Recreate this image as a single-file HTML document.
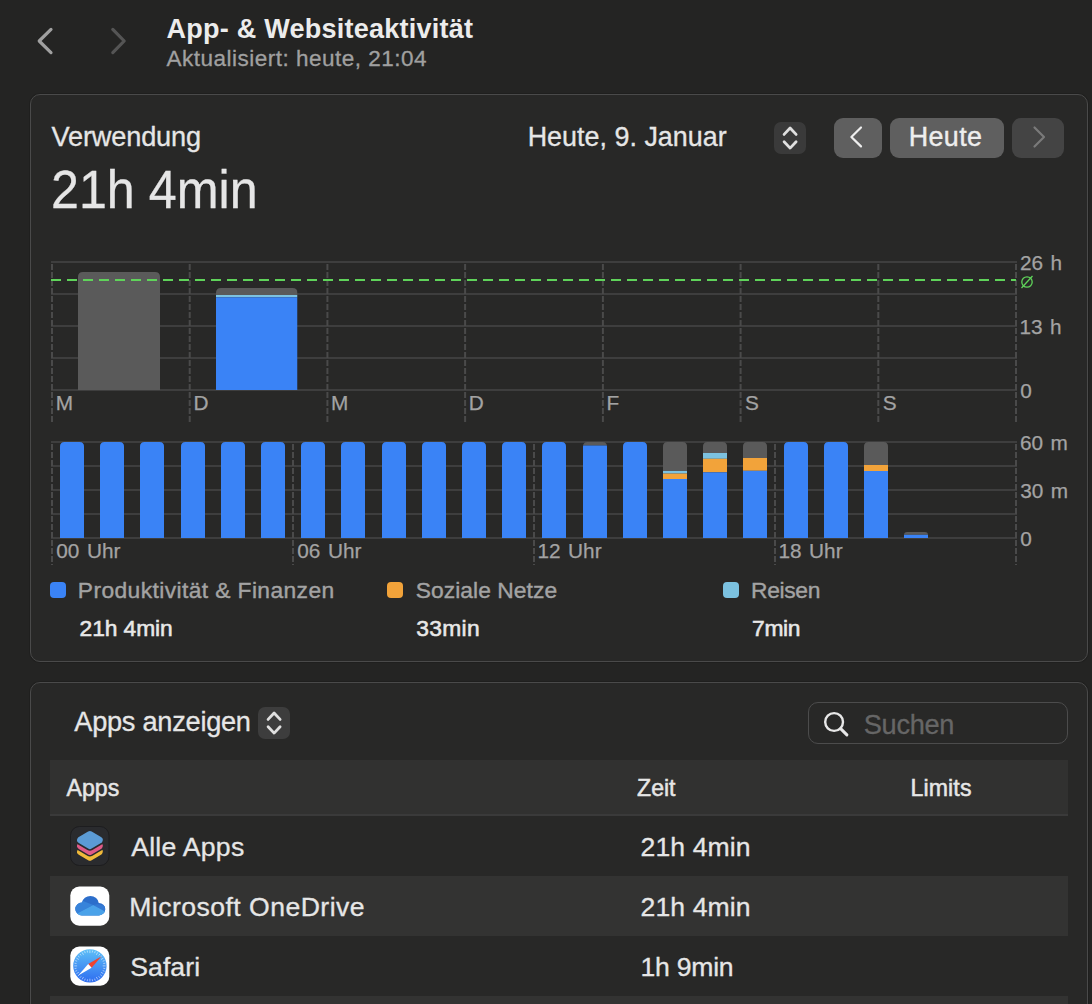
<!DOCTYPE html>
<html><head><meta charset="utf-8">
<style>
*{margin:0;padding:0;box-sizing:border-box}
html,body{width:1092px;height:1004px;overflow:hidden;background:#242423}
body{font-family:"Liberation Sans",sans-serif;color:#e6e6e6}
#wrap{position:relative;width:1092px;height:1004px;overflow:hidden;background:#242423}
.t{position:absolute;white-space:nowrap;line-height:1;-webkit-text-stroke:0.3px currentColor}
.panel{position:absolute;background:#282827;border:1.8px solid #4a4a4a;border-radius:10px;box-shadow:0 0 0 1px rgba(0,0,0,0.12)}
.btn{position:absolute}
svg{position:absolute;left:0;top:0;overflow:visible}
</style></head><body><div id="wrap">
<svg width="1092" height="90">
<polyline points="51,29.4 39.2,41 51,52.6" fill="none" stroke="#a0a0a0" stroke-width="3.2" stroke-linecap="round" stroke-linejoin="round"/>
<polyline points="112.8,29.4 124.2,41 112.8,52.6" fill="none" stroke="#555555" stroke-width="3.2" stroke-linecap="round" stroke-linejoin="round"/>
</svg>
<div class="t" style="left:166.5px;top:16.020px;font-size:27.04px;color:#ececec;font-weight:bold;letter-spacing:0.227px;-webkit-text-stroke:0px currentColor;">App- &amp; Websiteaktivität</div>
<div class="t" style="left:166.5px;top:48.011px;font-size:22.53px;color:#a0a0a0;font-weight:normal;letter-spacing:0.492px;-webkit-text-stroke:0.3px currentColor;">Aktualisiert: heute, 21:04</div>
<div class="panel" style="left:30px;top:94px;width:1058px;height:568px"></div>
<div class="t" style="left:51.6px;top:123.011px;font-size:27.18px;color:#e6e6e6;font-weight:normal;letter-spacing:-0.178px;-webkit-text-stroke:0.3px currentColor;">Verwendung</div>
<div class="t" style="left:50.74px;top:162.025px;font-size:54.07px;color:#e6e6e6;font-weight:normal;letter-spacing:-2.2px;-webkit-text-stroke:0.3px currentColor;transform:scaleX(0.929);transform-origin:0 0;letter-spacing:0">21h 4min</div>
<div class="t" style="left:527.7px;top:124.022px;font-size:26.89px;color:#e6e6e6;font-weight:normal;letter-spacing:0.02px;-webkit-text-stroke:0.3px currentColor;">Heute, 9. Januar</div>
<div class="btn" style="left:774px;top:122px;width:32px;height:32px;background:#3a3a3a;border-radius:7px"></div>
<div class="btn" style="left:834px;top:118px;width:48px;height:40px;background:#5f5f5f;border-radius:9px"></div>
<div class="btn" style="left:890px;top:118px;width:114px;height:40px;background:#5f5f5f;border-radius:9px"></div>
<div class="btn" style="left:1012px;top:118px;width:52px;height:40px;background:#444444;border-radius:9px"></div>
<svg width="1092" height="200">
<polyline points="784.1,134.4 790.1,128 796.1,134.4" fill="none" stroke="#e0e0e0" stroke-width="2.8" stroke-linecap="round" stroke-linejoin="round"/>
<polyline points="784.1,141.7 790.1,148.1 796.1,141.7" fill="none" stroke="#e0e0e0" stroke-width="2.8" stroke-linecap="round" stroke-linejoin="round"/>
<polyline points="861,127.5 851.4,137 861,146.4" fill="none" stroke="#eeeeee" stroke-width="2.2" stroke-linecap="round" stroke-linejoin="round"/>
<polyline points="1034.5,127.5 1044,137 1034.5,146.5" fill="none" stroke="#7a7a7a" stroke-width="2.2" stroke-linecap="round" stroke-linejoin="round"/>
</svg>
<div class="t" style="left:908.7px;top:124.022px;font-size:26.89px;color:#eeeeee;font-weight:normal;letter-spacing:0.4px;-webkit-text-stroke:0.4px currentColor;">Heute</div>
<svg width="1092" height="1004">
<rect x="51" y="261" width="966" height="2" fill="#3e3e3e"/>
<rect x="51" y="293" width="966" height="2" fill="#3e3e3e"/>
<rect x="51" y="325" width="966" height="2" fill="#3e3e3e"/>
<rect x="51" y="357" width="966" height="2" fill="#3e3e3e"/>
<rect x="51" y="389" width="966" height="2" fill="#3e3e3e"/>
<line x1="52.0" y1="264" x2="52.0" y2="423" stroke="#4a4a4a" stroke-width="2" stroke-dasharray="6 2"/>
<line x1="189.7" y1="264" x2="189.7" y2="423" stroke="#4a4a4a" stroke-width="2" stroke-dasharray="6 2"/>
<line x1="327.4" y1="264" x2="327.4" y2="423" stroke="#4a4a4a" stroke-width="2" stroke-dasharray="6 2"/>
<line x1="465.1" y1="264" x2="465.1" y2="423" stroke="#4a4a4a" stroke-width="2" stroke-dasharray="6 2"/>
<line x1="602.9" y1="264" x2="602.9" y2="423" stroke="#4a4a4a" stroke-width="2" stroke-dasharray="6 2"/>
<line x1="740.6" y1="264" x2="740.6" y2="423" stroke="#4a4a4a" stroke-width="2" stroke-dasharray="6 2"/>
<line x1="878.3" y1="264" x2="878.3" y2="423" stroke="#4a4a4a" stroke-width="2" stroke-dasharray="6 2"/>
<line x1="1016.0" y1="264" x2="1016.0" y2="423" stroke="#4a4a4a" stroke-width="2" stroke-dasharray="6 2"/>
<clipPath id="c78_272"><path d="M78,390 V277 Q78,272 83,272 H155 Q160,272 160,277 V390 Z"/></clipPath><g clip-path="url(#c78_272)"><rect x="78" y="272" width="82" height="118" fill="#5a5a5a"/></g>
<clipPath id="c216_288"><path d="M216,390 V293 Q216,288 221,288 H292.5 Q297.5,288 297.5,293 V390 Z"/></clipPath><g clip-path="url(#c216_288)"><rect x="216" y="288" width="81.5" height="7" fill="#5a5a5a"/><rect x="216" y="295" width="81.5" height="2.3000000000000114" fill="#7cc2e0"/><rect x="216" y="297.3" width="81.5" height="92.69999999999999" fill="#3a83f6"/></g>
<line x1="51" y1="280" x2="1016" y2="280" stroke="#5fd35a" stroke-width="2" stroke-dasharray="10 6"/>
<circle cx="1027" cy="282" r="5.2" fill="none" stroke="#5fd35a" stroke-width="1.3"/><line x1="1021.5" y1="288" x2="1032.5" y2="276" stroke="#5fd35a" stroke-width="1.3"/>
<rect x="51" y="441" width="966" height="2" fill="#3e3e3e"/>
<rect x="51" y="465" width="966" height="2" fill="#3e3e3e"/>
<rect x="51" y="489" width="966" height="2" fill="#3e3e3e"/>
<rect x="51" y="513" width="966" height="2" fill="#3e3e3e"/>
<rect x="51" y="537" width="966" height="2" fill="#3e3e3e"/>
<line x1="52.0" y1="444" x2="52.0" y2="565" stroke="#4a4a4a" stroke-width="2" stroke-dasharray="6 2"/>
<line x1="293.0" y1="444" x2="293.0" y2="565" stroke="#4a4a4a" stroke-width="2" stroke-dasharray="6 2"/>
<line x1="534.0" y1="444" x2="534.0" y2="565" stroke="#4a4a4a" stroke-width="2" stroke-dasharray="6 2"/>
<line x1="775.0" y1="444" x2="775.0" y2="565" stroke="#4a4a4a" stroke-width="2" stroke-dasharray="6 2"/>
<line x1="1016.0" y1="444" x2="1016.0" y2="565" stroke="#4a4a4a" stroke-width="2" stroke-dasharray="6 2"/>
<clipPath id="c60_442"><path d="M60,538 V446.5 Q60,442 64.5,442 H79.5 Q84,442 84,446.5 V538 Z"/></clipPath><g clip-path="url(#c60_442)"><rect x="60" y="442" width="24" height="96" fill="#3a83f6"/></g>
<clipPath id="c100_442"><path d="M100,538 V446.5 Q100,442 104.5,442 H119.5 Q124,442 124,446.5 V538 Z"/></clipPath><g clip-path="url(#c100_442)"><rect x="100" y="442" width="24" height="96" fill="#3a83f6"/></g>
<clipPath id="c140_442"><path d="M140,538 V446.5 Q140,442 144.5,442 H159.5 Q164,442 164,446.5 V538 Z"/></clipPath><g clip-path="url(#c140_442)"><rect x="140" y="442" width="24" height="96" fill="#3a83f6"/></g>
<clipPath id="c181_442"><path d="M181,538 V446.5 Q181,442 185.5,442 H200.5 Q205,442 205,446.5 V538 Z"/></clipPath><g clip-path="url(#c181_442)"><rect x="181" y="442" width="24" height="96" fill="#3a83f6"/></g>
<clipPath id="c221_442"><path d="M221,538 V446.5 Q221,442 225.5,442 H240.5 Q245,442 245,446.5 V538 Z"/></clipPath><g clip-path="url(#c221_442)"><rect x="221" y="442" width="24" height="96" fill="#3a83f6"/></g>
<clipPath id="c261_442"><path d="M261,538 V446.5 Q261,442 265.5,442 H280.5 Q285,442 285,446.5 V538 Z"/></clipPath><g clip-path="url(#c261_442)"><rect x="261" y="442" width="24" height="96" fill="#3a83f6"/></g>
<clipPath id="c301_442"><path d="M301,538 V446.5 Q301,442 305.5,442 H320.5 Q325,442 325,446.5 V538 Z"/></clipPath><g clip-path="url(#c301_442)"><rect x="301" y="442" width="24" height="96" fill="#3a83f6"/></g>
<clipPath id="c341_442"><path d="M341,538 V446.5 Q341,442 345.5,442 H360.5 Q365,442 365,446.5 V538 Z"/></clipPath><g clip-path="url(#c341_442)"><rect x="341" y="442" width="24" height="96" fill="#3a83f6"/></g>
<clipPath id="c382_442"><path d="M382,538 V446.5 Q382,442 386.5,442 H401.5 Q406,442 406,446.5 V538 Z"/></clipPath><g clip-path="url(#c382_442)"><rect x="382" y="442" width="24" height="96" fill="#3a83f6"/></g>
<clipPath id="c422_442"><path d="M422,538 V446.5 Q422,442 426.5,442 H441.5 Q446,442 446,446.5 V538 Z"/></clipPath><g clip-path="url(#c422_442)"><rect x="422" y="442" width="24" height="96" fill="#3a83f6"/></g>
<clipPath id="c462_442"><path d="M462,538 V446.5 Q462,442 466.5,442 H481.5 Q486,442 486,446.5 V538 Z"/></clipPath><g clip-path="url(#c462_442)"><rect x="462" y="442" width="24" height="96" fill="#3a83f6"/></g>
<clipPath id="c502_442"><path d="M502,538 V446.5 Q502,442 506.5,442 H521.5 Q526,442 526,446.5 V538 Z"/></clipPath><g clip-path="url(#c502_442)"><rect x="502" y="442" width="24" height="96" fill="#3a83f6"/></g>
<clipPath id="c542_442"><path d="M542,538 V446.5 Q542,442 546.5,442 H561.5 Q566,442 566,446.5 V538 Z"/></clipPath><g clip-path="url(#c542_442)"><rect x="542" y="442" width="24" height="96" fill="#3a83f6"/></g>
<clipPath id="c583_442"><path d="M583,538 V446.5 Q583,442 587.5,442 H602.5 Q607,442 607,446.5 V538 Z"/></clipPath><g clip-path="url(#c583_442)"><rect x="583" y="442" width="24" height="3.5" fill="#5a5a5a"/><rect x="583" y="445.5" width="24" height="92.5" fill="#3a83f6"/></g>
<clipPath id="c623_442"><path d="M623,538 V446.5 Q623,442 627.5,442 H642.5 Q647,442 647,446.5 V538 Z"/></clipPath><g clip-path="url(#c623_442)"><rect x="623" y="442" width="24" height="96" fill="#3a83f6"/></g>
<clipPath id="c663_442"><path d="M663,538 V446.5 Q663,442 667.5,442 H682.5 Q687,442 687,446.5 V538 Z"/></clipPath><g clip-path="url(#c663_442)"><rect x="663" y="442" width="24" height="29" fill="#5a5a5a"/><rect x="663" y="471" width="24" height="2.6000000000000227" fill="#7cc2e0"/><rect x="663" y="473.6" width="24" height="5.399999999999977" fill="#f2a33a"/><rect x="663" y="479" width="24" height="59" fill="#3a83f6"/></g>
<clipPath id="c703_442"><path d="M703,538 V446.5 Q703,442 707.5,442 H722.5 Q727,442 727,446.5 V538 Z"/></clipPath><g clip-path="url(#c703_442)"><rect x="703" y="442" width="24" height="11" fill="#5a5a5a"/><rect x="703" y="453" width="24" height="5.800000000000011" fill="#7cc2e0"/><rect x="703" y="458.8" width="24" height="13.5" fill="#f2a33a"/><rect x="703" y="472.3" width="24" height="65.69999999999999" fill="#3a83f6"/></g>
<clipPath id="c743_442"><path d="M743,538 V446.5 Q743,442 747.5,442 H762.5 Q767,442 767,446.5 V538 Z"/></clipPath><g clip-path="url(#c743_442)"><rect x="743" y="442" width="24" height="16" fill="#5a5a5a"/><rect x="743" y="458" width="24" height="12.800000000000011" fill="#f2a33a"/><rect x="743" y="470.8" width="24" height="67.19999999999999" fill="#3a83f6"/></g>
<clipPath id="c784_442"><path d="M784,538 V446.5 Q784,442 788.5,442 H803.5 Q808,442 808,446.5 V538 Z"/></clipPath><g clip-path="url(#c784_442)"><rect x="784" y="442" width="24" height="96" fill="#3a83f6"/></g>
<clipPath id="c824_442"><path d="M824,538 V446.5 Q824,442 828.5,442 H843.5 Q848,442 848,446.5 V538 Z"/></clipPath><g clip-path="url(#c824_442)"><rect x="824" y="442" width="24" height="96" fill="#3a83f6"/></g>
<clipPath id="c864_442"><path d="M864,538 V446.5 Q864,442 868.5,442 H883.5 Q888,442 888,446.5 V538 Z"/></clipPath><g clip-path="url(#c864_442)"><rect x="864" y="442" width="24" height="23" fill="#5a5a5a"/><rect x="864" y="465" width="24" height="6" fill="#f2a33a"/><rect x="864" y="471" width="24" height="67" fill="#3a83f6"/></g>
<clipPath id="c904_532"><path d="M904,538 V535 Q904,532 907,532 H925 Q928,532 928,535 V538 Z"/></clipPath><g clip-path="url(#c904_532)"><rect x="904" y="532" width="24" height="2.7999999999999545" fill="#5a5a5a"/><rect x="904" y="534.8" width="24" height="3.2000000000000455" fill="#3a83f6"/></g>
</svg>
<div class="t" style="left:55.69px;top:393.015px;font-size:20.79px;color:#a3a3a3;font-weight:normal;letter-spacing:0.32px;-webkit-text-stroke:0.25px currentColor;">M</div>
<div class="t" style="left:193.41px;top:393.015px;font-size:20.79px;color:#a3a3a3;font-weight:normal;letter-spacing:0.32px;-webkit-text-stroke:0.25px currentColor;">D</div>
<div class="t" style="left:331.12px;top:393.015px;font-size:20.79px;color:#a3a3a3;font-weight:normal;letter-spacing:0.32px;-webkit-text-stroke:0.25px currentColor;">M</div>
<div class="t" style="left:468.84px;top:393.015px;font-size:20.79px;color:#a3a3a3;font-weight:normal;letter-spacing:0.32px;-webkit-text-stroke:0.25px currentColor;">D</div>
<div class="t" style="left:606.55px;top:393.015px;font-size:20.79px;color:#a3a3a3;font-weight:normal;letter-spacing:0.32px;-webkit-text-stroke:0.25px currentColor;">F</div>
<div class="t" style="left:745.03px;top:393.015px;font-size:20.79px;color:#a3a3a3;font-weight:normal;letter-spacing:0.32px;-webkit-text-stroke:0.25px currentColor;">S</div>
<div class="t" style="left:882.74px;top:393.015px;font-size:20.79px;color:#a3a3a3;font-weight:normal;letter-spacing:0.32px;-webkit-text-stroke:0.25px currentColor;">S</div>
<div class="t" style="left:56.19px;top:541.015px;font-size:20.79px;color:#a3a3a3;font-weight:normal;letter-spacing:0.32px;-webkit-text-stroke:0.25px currentColor;letter-spacing:0;word-spacing:1.8px">00 Uhr</div>
<div class="t" style="left:297.19px;top:541.015px;font-size:20.79px;color:#a3a3a3;font-weight:normal;letter-spacing:0.32px;-webkit-text-stroke:0.25px currentColor;letter-spacing:0;word-spacing:1.8px">06 Uhr</div>
<div class="t" style="left:537.42px;top:541.015px;font-size:20.79px;color:#a3a3a3;font-weight:normal;letter-spacing:0.32px;-webkit-text-stroke:0.25px currentColor;letter-spacing:0;word-spacing:1.8px">12 Uhr</div>
<div class="t" style="left:778.42px;top:541.015px;font-size:20.79px;color:#a3a3a3;font-weight:normal;letter-spacing:0.32px;-webkit-text-stroke:0.25px currentColor;letter-spacing:0;word-spacing:1.8px">18 Uhr</div>
<div class="t" style="left:1020.05px;top:253.015px;font-size:20.79px;color:#a3a3a3;font-weight:normal;letter-spacing:0.433px;-webkit-text-stroke:0.25px currentColor;letter-spacing:0;word-spacing:1.5px">26 h</div>
<div class="t" style="left:1019.52px;top:317.015px;font-size:20.79px;color:#a3a3a3;font-weight:normal;letter-spacing:0.433px;-webkit-text-stroke:0.25px currentColor;letter-spacing:0;word-spacing:1.5px">13 h</div>
<div class="t" style="left:1020.29px;top:381.015px;font-size:20.79px;color:#a3a3a3;font-weight:normal;letter-spacing:0.433px;-webkit-text-stroke:0.25px currentColor;letter-spacing:0;word-spacing:1.5px">0</div>
<div class="t" style="left:1020.04px;top:433.015px;font-size:20.79px;color:#a3a3a3;font-weight:normal;letter-spacing:0.433px;-webkit-text-stroke:0.25px currentColor;letter-spacing:0;word-spacing:1.5px">60 m</div>
<div class="t" style="left:1020.31px;top:481.015px;font-size:20.79px;color:#a3a3a3;font-weight:normal;letter-spacing:0.433px;-webkit-text-stroke:0.25px currentColor;letter-spacing:0;word-spacing:1.5px">30 m</div>
<div class="t" style="left:1020.29px;top:529.015px;font-size:20.79px;color:#a3a3a3;font-weight:normal;letter-spacing:0.433px;-webkit-text-stroke:0.25px currentColor;letter-spacing:0;word-spacing:1.5px">0</div>
<div class="btn" style="left:50px;top:582px;width:16px;height:16px;background:#3a83f6;border-radius:4px"></div>
<div class="btn" style="left:387px;top:582px;width:16px;height:16px;background:#f2a33a;border-radius:4px"></div>
<div class="btn" style="left:723px;top:582px;width:16px;height:16px;background:#7cc2e0;border-radius:4px"></div>
<div class="t" style="left:77.8px;top:579.015px;font-size:22.82px;color:#a3a3a3;font-weight:normal;letter-spacing:0.396px;-webkit-text-stroke:0.4px currentColor;">Produktivität &amp; Finanzen</div>
<div class="t" style="left:415.7px;top:579.015px;font-size:22.82px;color:#a3a3a3;font-weight:normal;letter-spacing:0.058px;-webkit-text-stroke:0.4px currentColor;">Soziale Netze</div>
<div class="t" style="left:751.1px;top:579.015px;font-size:22.82px;color:#a3a3a3;font-weight:normal;letter-spacing:-0.34px;-webkit-text-stroke:0.4px currentColor;">Reisen</div>
<div class="t" style="left:79.6px;top:617.015px;font-size:22.82px;color:#e8e8e8;font-weight:normal;letter-spacing:-0.1px;-webkit-text-stroke:0.55px currentColor;">21h 4min</div>
<div class="t" style="left:416.2px;top:617.015px;font-size:22.82px;color:#e8e8e8;font-weight:normal;letter-spacing:0.325px;-webkit-text-stroke:0.55px currentColor;">33min</div>
<div class="t" style="left:752.1px;top:617.015px;font-size:22.82px;color:#e8e8e8;font-weight:normal;letter-spacing:-0.333px;-webkit-text-stroke:0.55px currentColor;">7min</div>
<div class="panel" style="left:30px;top:682px;width:1058px;height:360px"></div>
<div class="t" style="left:74.3px;top:708.011px;font-size:27.18px;color:#e6e6e6;font-weight:normal;letter-spacing:-0.258px;-webkit-text-stroke:0.3px currentColor;">Apps anzeigen</div>
<div class="btn" style="left:258px;top:707px;width:32px;height:32px;background:#3d3d3d;border-radius:7px"></div>
<svg width="1092" height="1004">
<polyline points="268.1,719.4 274.1,713 280.1,719.4" fill="none" stroke="#e0e0e0" stroke-width="2.8" stroke-linecap="round" stroke-linejoin="round"/>
<polyline points="268.1,726.7 274.1,733.1 280.1,726.7" fill="none" stroke="#e0e0e0" stroke-width="2.8" stroke-linecap="round" stroke-linejoin="round"/>
</svg>
<div class="btn" style="left:808px;top:702px;width:260px;height:42px;border:1.8px solid #4c4c4c;border-radius:10px"></div>
<svg width="1092" height="1004">
<circle cx="834.1" cy="722" r="8.9" fill="none" stroke="#e8e8e8" stroke-width="2.4"/>
<line x1="840.6" y1="728.6" x2="846.9" y2="734.9" stroke="#e8e8e8" stroke-width="3" stroke-linecap="round"/>
</svg>
<div class="t" style="left:863.8px;top:711.011px;font-size:27.18px;color:#666666;font-weight:normal;letter-spacing:-0.32px;-webkit-text-stroke:0.3px currentColor;">Suchen</div>
<div class="btn" style="left:50px;top:760px;width:1018px;height:54px;background:#313130"></div>
<div class="btn" style="left:50px;top:814px;width:1018px;height:2px;background:#3a3a3a"></div>
<div class="t" style="left:66.4px;top:777.020px;font-size:23.11px;color:#e6e6e6;font-weight:normal;letter-spacing:0.1px;-webkit-text-stroke:0.5px currentColor;">Apps</div>
<div class="t" style="left:637.1px;top:777.020px;font-size:23.11px;color:#e6e6e6;font-weight:normal;letter-spacing:-0.067px;-webkit-text-stroke:0.5px currentColor;">Zeit</div>
<div class="t" style="left:910.4px;top:777.020px;font-size:23.11px;color:#e6e6e6;font-weight:normal;letter-spacing:0.14px;-webkit-text-stroke:0.5px currentColor;">Limits</div>
<div class="btn" style="left:50px;top:876px;width:1018px;height:60px;background:#333332"></div>
<div class="btn" style="left:50px;top:996px;width:1018px;height:60px;background:#333332"></div>
<div class="t" style="left:131.2px;top:834.018px;font-size:26.6px;color:#e6e6e6;font-weight:normal;letter-spacing:0.263px;-webkit-text-stroke:0.3px currentColor;">Alle Apps</div>
<div class="t" style="left:129.2px;top:894.018px;font-size:26.6px;color:#e6e6e6;font-weight:normal;letter-spacing:0.459px;-webkit-text-stroke:0.3px currentColor;">Microsoft OneDrive</div>
<div class="t" style="left:130.2px;top:954.018px;font-size:26.6px;color:#e6e6e6;font-weight:normal;letter-spacing:0.08px;-webkit-text-stroke:0.3px currentColor;">Safari</div>
<div class="t" style="left:640.6px;top:834.018px;font-size:26.6px;color:#e6e6e6;font-weight:normal;letter-spacing:0.071px;-webkit-text-stroke:0.3px currentColor;">21h 4min</div>
<div class="t" style="left:640.6px;top:894.018px;font-size:26.6px;color:#e6e6e6;font-weight:normal;letter-spacing:0.071px;-webkit-text-stroke:0.3px currentColor;">21h 4min</div>
<div class="t" style="left:640.6px;top:954.018px;font-size:26.6px;color:#e6e6e6;font-weight:normal;letter-spacing:-0.267px;-webkit-text-stroke:0.3px currentColor;">1h 9min</div>
<svg width="1092" height="1004"><rect x="70.5" y="826.5" width="38.5" height="39" rx="9" fill="#2a2b2e" stroke="#1d1d1f" stroke-width="1"/><polygon points="80.60,851.70 89.90,846.20 99.20,851.70 89.90,857.20" fill="#f0b93a" stroke="#f0b93a" stroke-width="7" stroke-linejoin="round"/><polygon points="80.60,845.90 89.90,840.40 99.20,845.90 89.90,851.40" fill="#2a2b2e" stroke="#2a2b2e" stroke-width="10.0" stroke-linejoin="round"/><polygon points="80.60,845.90 89.90,840.40 99.20,845.90 89.90,851.40" fill="#e05a87" stroke="#e05a87" stroke-width="7" stroke-linejoin="round"/><polygon points="80.60,840.10 89.90,834.60 99.20,840.10 89.90,845.60" fill="#2a2b2e" stroke="#2a2b2e" stroke-width="10.0" stroke-linejoin="round"/><polygon points="80.60,840.10 89.90,834.60 99.20,840.10 89.90,845.60" fill="#5b9bd5" stroke="#5b9bd5" stroke-width="7" stroke-linejoin="round"/><rect x="70.3" y="886.5" width="39" height="39.2" rx="9" fill="#ffffff"/><defs><clipPath id="cloud"><circle cx="81.8" cy="909" r="6.5"/><ellipse cx="90.4" cy="903.6" rx="8.4" ry="7.7"/><circle cx="99" cy="909.2" r="6.2"/><rect x="81.8" y="906" width="17.2" height="9.4"/></clipPath></defs><g clip-path="url(#cloud)"><rect x="74" y="894" width="32" height="23" fill="#2c6ecb"/><polygon points="74,897 81.8,900.6 93.2,905 77,913.5 74,917" fill="#3783da"/><polygon points="93.2,905 98,904 106,906 106,912" fill="#3479d4"/><polygon points="74,917 77,913.5 93.2,905 106,912 106,917" fill="#4aa2e9"/></g><rect x="70.3" y="946.5" width="39" height="39.2" rx="9" fill="#ffffff"/><defs><linearGradient id="saf" x1="0" y1="0" x2="0" y2="1"><stop offset="0" stop-color="#5ec0f7"/><stop offset="1" stop-color="#2e6cf0"/></linearGradient></defs><circle cx="89.9" cy="965.9" r="16.7" fill="url(#saf)"/><path d="M89.90,953.10 L89.90,950.30 M92.26,952.51 L92.61,950.54 M94.55,953.12 L95.24,951.24 M96.30,954.81 L97.70,952.39 M98.64,955.48 L99.93,953.95 M100.32,957.16 L101.85,955.87 M100.99,959.50 L103.41,958.10 M102.68,961.25 L104.56,960.56 M103.29,963.54 L105.26,963.19 M102.70,965.90 L105.50,965.90 M103.29,968.26 L105.26,968.61 M102.68,970.55 L104.56,971.24 M100.99,972.30 L103.41,973.70 M100.32,974.64 L101.85,975.93 M98.64,976.32 L99.93,977.85 M96.30,976.99 L97.70,979.41 M94.55,978.68 L95.24,980.56 M92.26,979.29 L92.61,981.26 M89.90,978.70 L89.90,981.50 M87.54,979.29 L87.19,981.26 M85.25,978.68 L84.56,980.56 M83.50,976.99 L82.10,979.41 M81.16,976.32 L79.87,977.85 M79.48,974.64 L77.95,975.93 M78.81,972.30 L76.39,973.70 M77.12,970.55 L75.24,971.24 M76.51,968.26 L74.54,968.61 M77.10,965.90 L74.30,965.90 M76.51,963.54 L74.54,963.19 M77.12,961.25 L75.24,960.56 M78.81,959.50 L76.39,958.10 M79.48,957.16 L77.95,955.87 M81.16,955.48 L79.87,953.95 M83.50,954.81 L82.10,952.39 M85.25,953.12 L84.56,951.24 M87.54,952.51 L87.19,950.54" stroke="#ffffff" stroke-opacity="0.75" stroke-width="0.7"/><polygon points="101.6,956.3 91.6,967.8 88.2,964.0" fill="#f0432e"/><polygon points="78.2,975.5 91.6,967.8 88.2,964.0" fill="#ffffff"/></svg>
</div></body></html>
